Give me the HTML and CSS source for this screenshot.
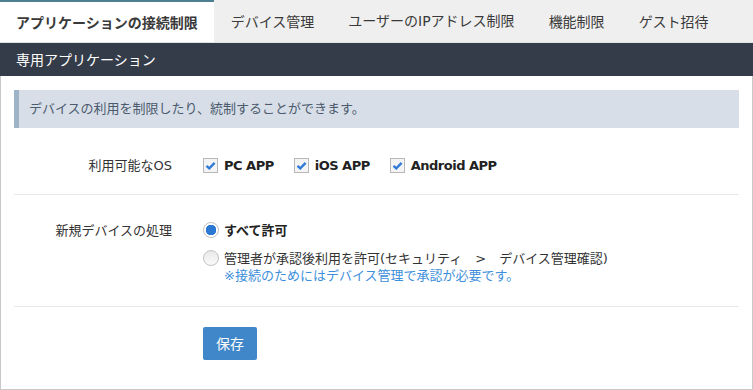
FILE: index.html
```html
<!DOCTYPE html>
<html lang="ja">
<head>
	<meta charset="UTF-8">
	<title>デバイス管理</title>
	<link rel="stylesheet" href="styles.css">
</head>
<body>
	<div class="tabs">
		<a href="javascript:;" class="tab cur">アプリケーションの接続制限</a>
		<a href="javascript:;" class="tab">デバイス管理</a>
		<a href="javascript:;" class="tab">ユーザーのIPアドレス制限</a>
		<a href="javascript:;" class="tab">機能制限</a>
		<a href="javascript:;" class="tab">ゲスト招待</a>
	</div>
	<div class="panelTitle">専用アプリケーション</div>
	<div class="panel">
		<div class="info">デバイスの利用を制限したり、統制することができます。</div>

		<div class="formRow first">
			<div class="label">利用可能なOS</div>
			<div class="field checks">
				<label class="check">
					<span class="box"><svg width="13" height="13" viewBox="0 0 13 13"><path d="M2.5 6.8 L5.3 9.4 L10.6 3.9" fill="none" stroke="#2f7bd6" stroke-width="2.4"/></svg></span>
					PC APP
				</label>
				<label class="check">
					<span class="box"><svg width="13" height="13" viewBox="0 0 13 13"><path d="M2.5 6.8 L5.3 9.4 L10.6 3.9" fill="none" stroke="#2f7bd6" stroke-width="2.4"/></svg></span>
					iOS APP
				</label>
				<label class="check">
					<span class="box"><svg width="13" height="13" viewBox="0 0 13 13"><path d="M2.5 6.8 L5.3 9.4 L10.6 3.9" fill="none" stroke="#2f7bd6" stroke-width="2.4"/></svg></span>
					Android APP
				</label>
			</div>
		</div>

		<div class="formRow">
			<div class="label">新規デバイスの処理</div>
			<div class="field">
				<label class="radio on">
					<span class="dot"></span>
					<span class="radioText"><b>すべて許可</b></span>
				</label>
				<label class="radio">
					<span class="dot"></span>
					<span class="radioText">管理者が承認後利用を許可(セキュリティ　&gt;　デバイス管理確認)<br><span class="note">※接続のためにはデバイス管理で承認が必要です。</span></span>
				</label>
			</div>
		</div>

		<div class="btnRow">
			<a href="javascript:;" class="saveBtn">保存</a>
		</div>
	</div>
</body>
</html>
```

FILE: styles.css
```css
*{
	margin: 0;
	padding: 0;
	box-sizing: border-box;
}
body{
	width: 753px;
	font-family: "DejaVu Sans", "Noto Sans CJK JP", sans-serif;
	font-size: 13px;
	color: #333;
	background-color: #fff;
}
a{
	text-decoration: none;
	color: inherit;
}
.tabs{
	display: flex;
	height: 43px;
	background-color: #efefef;
	border-bottom: 1px solid #e2e2e2;
}
.tabs .tab{
	height: 42px;
	padding: 0 17px;
	line-height: 43px;
	font-size: 14px;
	color: #3a3a3a;
	font-family: "Noto Sans CJK JP", sans-serif;
}
.tabs .tab.cur{
	padding: 0 16px;
	background-color: #fff;
	border-top: 2px solid #4e7f90;
	line-height: 40px;
	font-weight: bold;
}
.tabs .tab:nth-child(3){
	font-family: "DejaVu Sans", "Noto Sans CJK JP", sans-serif;
}
.panelTitle{
	height: 33px;
	line-height: 33px;
	padding-left: 16px;
	background-color: #353c49;
	color: #fff;
	font-size: 14px;
	font-family: "Noto Sans CJK JP", sans-serif;
}
.panel{
	height: 314px;
	padding: 14px 13px 0;
	border: 1px solid #c9c9c9;
	border-top: none;
}
.info{
	height: 38px;
	line-height: 38px;
	padding-left: 10px;
	background-color: #d7dee8;
	border-left: 5px solid #9db3c6;
	color: #4b5a6d;
}
.formRow{
	display: flex;
	padding: 27px 0 22px;
	border-bottom: 1px solid #e8e8e8;
	line-height: 17px;
}
.formRow.first{
	padding: 29px 0 20px;
}
.formRow .label{
	width: 158px;
	text-align: right;
	margin-right: 31px;
}
.checks{
	display: flex;
	gap: 20px;
}
.check{
	display: flex;
	align-items: center;
	font-weight: bold;
	letter-spacing: -0.5px;
	color: #222;
}
.check .box{
	display: flex;
	align-items: center;
	justify-content: center;
	width: 15px;
	height: 15px;
	margin-right: 6px;
	border: 1px solid #b8b8b8;
	background-color: #f4f4f4;
}
.radio{
	display: flex;
	align-items: flex-start;
}
.radio.on{
	margin-bottom: 11px;
}
.radio .dot{
	width: 16px;
	height: 16px;
	margin: 0 5px 0 0;
	border: 1px solid #c2c2c2;
	border-radius: 50%;
	background: linear-gradient(#e9e9e9, #fafafa);
	flex-shrink: 0;
}
.radio.on .dot{
	background: radial-gradient(circle, #2b78d3 0, #2b78d3 5px, #fff 5.5px);
}
.radioText{
	color: #333;
}
.radioText b{
	color: #222;
}
.note{
	color: #3d8fdb;
}
.btnRow{
	padding: 20px 0 0 189px;
}
.saveBtn{
	display: block;
	width: 54px;
	height: 33px;
	line-height: 33px;
	text-align: center;
	font-size: 14px;
	color: #fff;
	background-color: #3f87c9;
	border-radius: 2px;
	font-family: "Noto Sans CJK JP", sans-serif;
}
```
